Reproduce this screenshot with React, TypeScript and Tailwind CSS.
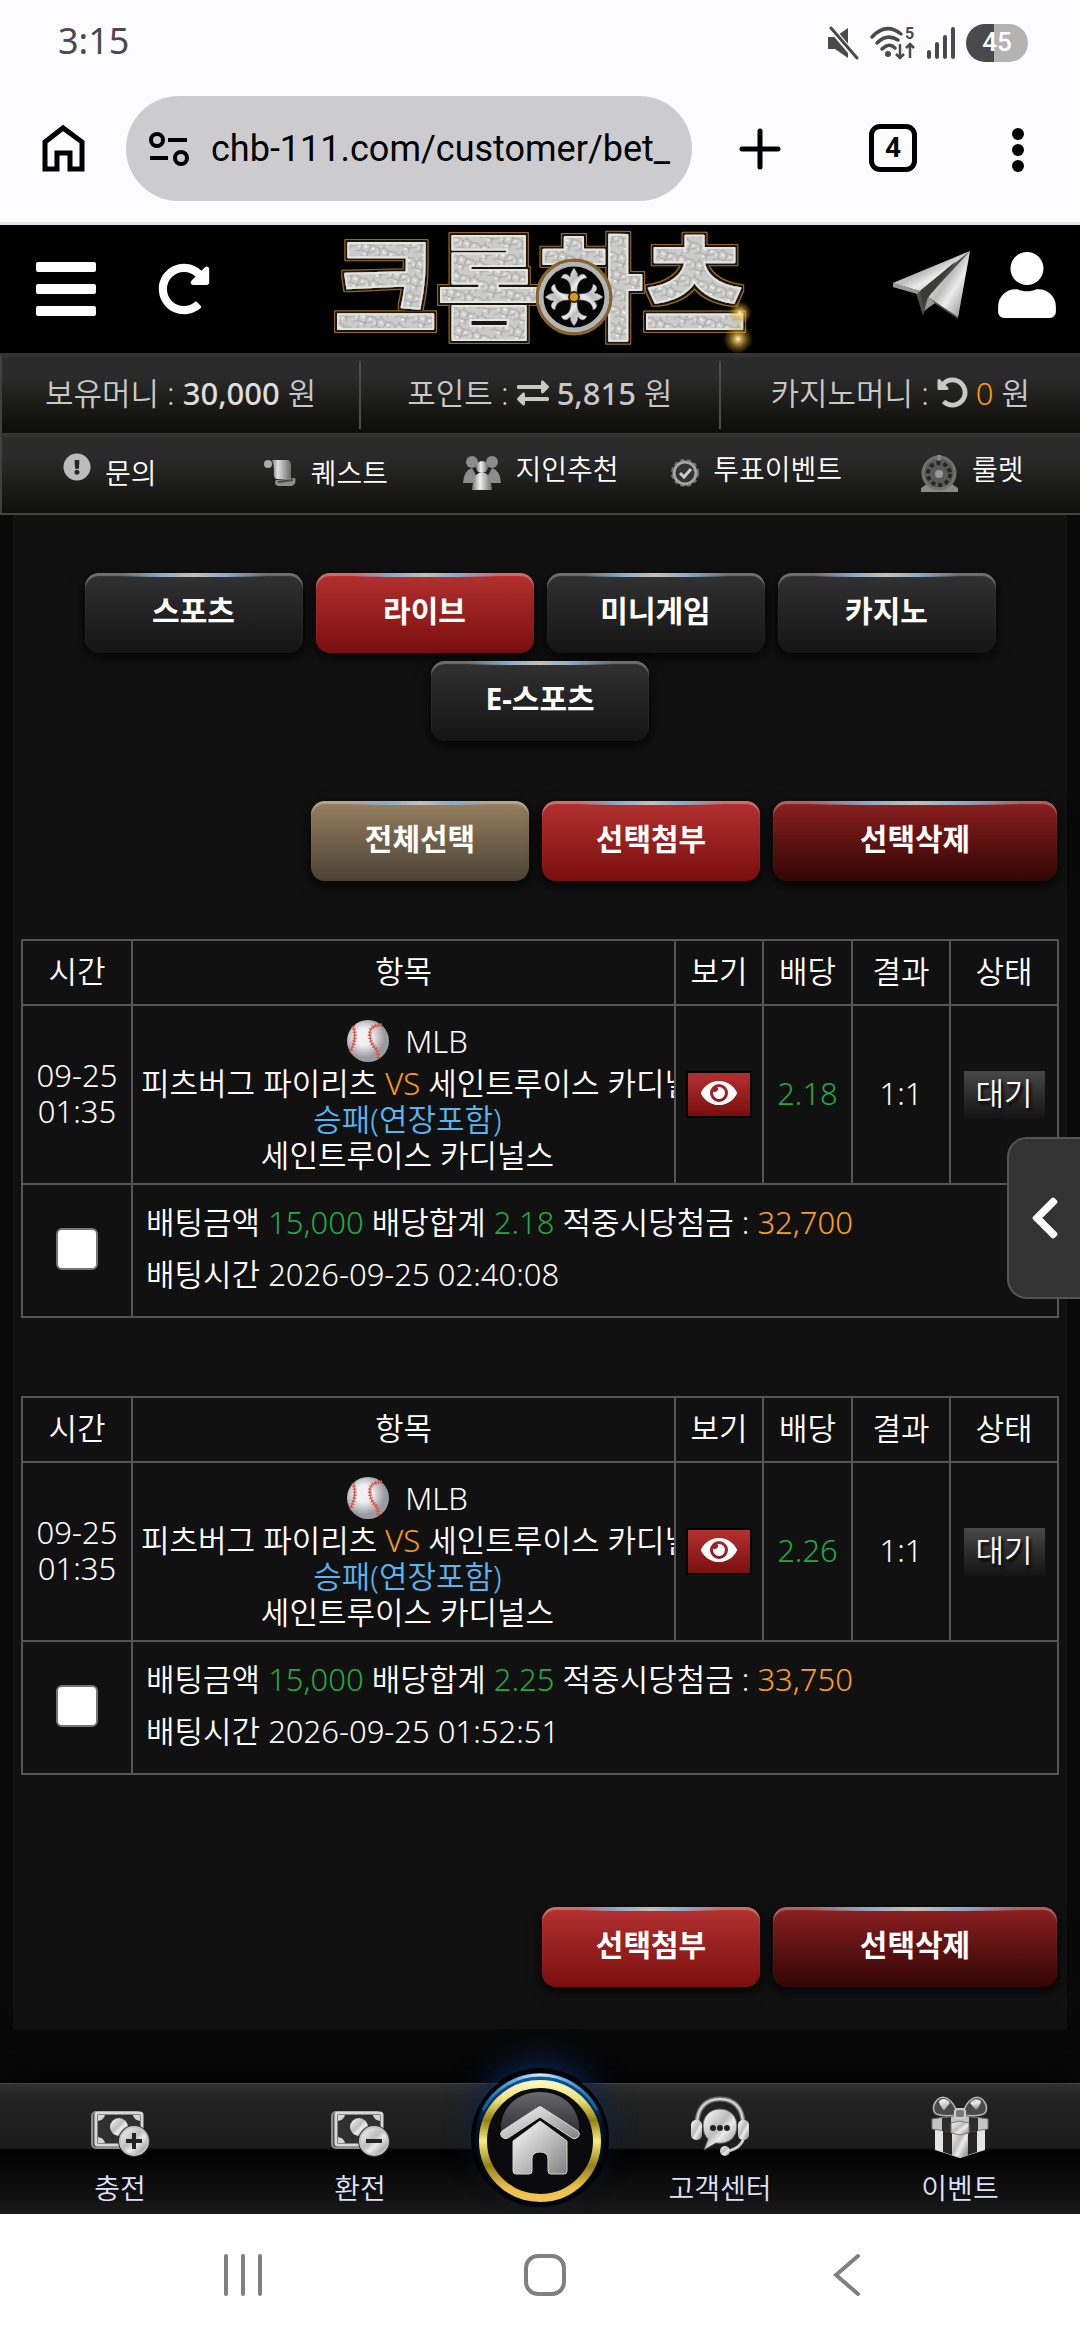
import {
    FaChevronLeft,
    FaExchangeAlt,
    FaExclamationCircle,
    FaEye,
    FaRedoAlt,
    FaUndoAlt,
    FaUser,
} from "react-icons/fa";

const tabs = ["스포츠", "라이브", "미니게임", "카지노", "E-스포츠"];

const bets = [
    {
        id: 1,
        odds: "2.18",
        amount: "15,000",
        totalOdds: "2.18",
        payout: "32,700",
        placedAt: "2026-09-25 02:40:08",
    },
    {
        id: 2,
        odds: "2.26",
        amount: "15,000",
        totalOdds: "2.25",
        payout: "33,750",
        placedAt: "2026-09-25 01:52:51",
    },
];

const tones = {
    dark: "from-[#323232] to-[#151515]",
    red: "from-[#b53030] to-[#7a0e0e]",
    wine: "from-[#8e2020] to-[#330606]",
    gold: "from-[#988060] to-[#4c4335]",
};

function GlossButton({
    tone,
    wide,
    children,
}: {
    tone: keyof typeof tones;
    wide?: boolean;
    children: React.ReactNode;
}) {
    return (
        <button
            type="button"
            className={`relative h-20 ${wide ? "w-[284px]" : "w-[218px]"} overflow-hidden rounded-[14px] bg-linear-to-b pb-[6px] text-[30px] font-bold text-white shadow-[inset_0_3px_1px_rgba(255,255,255,0.3),0_4px_12px_2px_rgba(0,0,0,0.7)] ${tones[tone]}`}
        >
            <span className="absolute inset-x-9 top-0 h-1 bg-[linear-gradient(90deg,transparent,#8fa9c4_28%,#c4bfb8_50%,#8fa9c4_72%,transparent)]" />
            {children}
        </button>
    );
}

function Metal({ id }: { id: string }) {
    return (
        <linearGradient id={id} x1="0" y1="0" x2="1" y2="1">
            <stop offset="0" stopColor="#ffffff" />
            <stop offset="0.45" stopColor="#bcbcbc" />
            <stop offset="0.6" stopColor="#ececec" />
            <stop offset="1" stopColor="#777777" />
        </linearGradient>
    );
}

function Logo() {
    return (
        <svg width="432" height="128" viewBox="0 0 432 128" role="img" aria-label="크롬하츠" className="overflow-visible">
            <defs>
                <filter id="bevel" x="-5%" y="-10%" width="110%" height="120%">
                    <feMorphology in="SourceAlpha" operator="dilate" radius="3" result="outer" />
                    <feFlood floodColor="#96692c" />
                    <feComposite in2="outer" operator="in" result="gold" />
                    <feMorphology in="SourceAlpha" operator="dilate" radius="2" result="inner" />
                    <feFlood floodColor="#1c140b" />
                    <feComposite in2="inner" operator="in" result="dark" />
                    <feMerge>
                        <feMergeNode in="gold" />
                        <feMergeNode in="dark" />
                        <feMergeNode in="SourceGraphic" />
                    </feMerge>
                </filter>
                <radialGradient id="spark">
                    <stop offset="0" stopColor="#fff8d0" />
                    <stop offset="0.3" stopColor="#f5c95a" stopOpacity="0.7" />
                    <stop offset="1" stopColor="#c08010" stopOpacity="0" />
                </radialGradient>
                <pattern id="crackle" width="19" height="17" patternUnits="userSpaceOnUse" patternTransform="rotate(18)">
                    <rect width="19" height="17" fill="#cbcbc9" />
                    <path d="M0 4l4 2 3-3 6 2 6-1M4 6l1 6-5 3M5 12l7 1 7-4M13 5l-1 8M7 3V0M12 13l1 4" fill="none" stroke="#999" strokeWidth="0.8" />
                    <path d="M7 7l3 1M15 8l2-1M2 9l1 1M8 15l2-1" stroke="#f8f8f8" strokeWidth="1.4" />
                </pattern>
                <Metal id="wheel" />
            </defs>
            <text
                x="10"
                y="105"
                fontFamily="'Noto Sans CJK KR', sans-serif"
                fontWeight="900"
                fontSize="112"
                fill="url(#crackle)"
                stroke="#e4e4e2"
                strokeWidth="2"
                strokeLinejoin="round"
                filter="url(#bevel)"
            >
                크롬하츠
            </text>
            <circle cx="250" cy="72" r="37" fill="#050505" stroke="#8a6426" strokeWidth="3" />
            <circle cx="250" cy="72" r="33" fill="none" stroke="#b4b4b4" strokeWidth="5" />
            <g fill="url(#wheel)" stroke="#555" strokeWidth="0.5">
                {[0, 90, 180, 270].map((deg) => (
                    <path
                        key={deg}
                        transform={`rotate(${deg} 250 72)`}
                        d="M247 70C247 60 246 54 237 53C239 48 243 48 246 52C246 48 248 46 250 43C252 46 254 48 254 52C257 48 261 48 263 53C254 54 253 60 253 70Z"
                    />
                ))}
            </g>
            <circle cx="250" cy="72" r="5" fill="#d99a25" stroke="#3a2505" strokeWidth="2" />
            <circle cx="416" cy="88" r="12" fill="url(#spark)" />
            <circle cx="414" cy="114" r="15" fill="url(#spark)" />
        </svg>
    );
}

function PaperPlane() {
    return (
        <svg width="80" height="70" viewBox="0 0 80 70">
            <defs>
                <Metal id="plane" />
            </defs>
            <path d="M1 33L78 1 66 69 36 49 31 66 24 43 1 37z" fill="#4d4d4b" />
            <path d="M1 33L78 1 28 41z" fill="url(#plane)" />
            <path d="M78 1L66 67 36 47z" fill="url(#plane)" />
            <path d="M64 11L28 41l4 20 5-15z" fill="#3c3c3a" />
            <path d="M1 33v4l24 7 3-3zM32 61l11-8-7-6z" fill="#999" />
        </svg>
    );
}

function QuestIcon() {
    return (
        <svg width="34" height="32" viewBox="0 0 34 32">
            <defs>
                <linearGradient id="quest">
                    <stop offset="0" stopColor="#777" />
                    <stop offset="0.3" stopColor="#e0e0e0" />
                    <stop offset="1" stopColor="#6a6a6a" />
                </linearGradient>
            </defs>
            <circle cx="5" cy="7" r="4" fill="#aaa" />
            <path d="M9 3h16q3 1 3 5v14H13q-3-2-2-7 0-7-2-12z" fill="url(#quest)" />
            <path d="M13 23l19-2q2 5-3 8H15q-5-2-2-6z" fill="#8d8d8d" />
            <path d="M15 25l15-2" stroke="#4a4a4a" strokeWidth="2" />
        </svg>
    );
}

function PeopleIcon() {
    return (
        <svg width="38" height="36" viewBox="0 0 38 36">
            <defs>
                <linearGradient id="people">
                    <stop offset="0" stopColor="#777" />
                    <stop offset="0.4" stopColor="#f0f0f0" />
                    <stop offset="1" stopColor="#6a6a6a" />
                </linearGradient>
            </defs>
            <g fill="#8c8c8c">
                <circle cx="9" cy="7" r="6" />
                <circle cx="29" cy="7" r="6" />
                <path d="M0 28q1-13 9-15l8 15zM38 28q-1-13-9-15l-8 15z" />
            </g>
            <circle cx="19" cy="12" r="6" fill="url(#people)" />
            <path d="M9 35q1-15 7-17h6q6 2 7 17z" fill="url(#people)" />
        </svg>
    );
}

function VoteIcon() {
    return (
        <svg width="28" height="32" viewBox="0 0 28 32" fill="none">
            <circle cx="14" cy="16" r="11" fill="#333" stroke="#a5a5a5" strokeWidth="3" />
            <circle cx="14" cy="16" r="13" stroke="#777" strokeWidth="2" strokeDasharray="4 3" />
            <path d="M9 16l4 4 7-8" stroke="#ccc" strokeWidth="3" />
        </svg>
    );
}

function RouletteIcon() {
    return (
        <svg width="37" height="38" viewBox="0 0 37 38" fill="none">
            <path d="M0 38v-4l6-4h25l6 4v4z" fill="#888" />
            <circle cx="18" cy="19" r="16" fill="#5a5a5a" stroke="#707070" strokeWidth="3" />
            <circle cx="18" cy="20" r="11" stroke="#262626" strokeWidth="4" strokeDasharray="4 3" />
            <circle cx="18" cy="20" r="4" fill="#999" />
            <path d="M18 1v5" stroke="#888" strokeWidth="4" />
        </svg>
    );
}

function Baseball() {
    return (
        <svg width="42" height="42" viewBox="0 0 42 42" fill="none">
            <defs>
                <radialGradient id="ball" cx="0.4" cy="0.4">
                    <stop offset="0.4" stopColor="#f0f0f4" />
                    <stop offset="1" stopColor="#9a9aa2" />
                </radialGradient>
            </defs>
            <circle cx="21" cy="21" r="21" fill="url(#ball)" />
            <path d="M6 6q5 12-3 26M35 5q-14 0-12 12 1 7 6 12 3 5 2 10" stroke="#e0604f" strokeWidth="1.5" />
            <path d="M6 6q5 12-3 26M35 5q-14 0-12 12 1 7 6 12 3 5 2 10" stroke="#d4503f" strokeWidth="4" strokeDasharray="1 2" />
        </svg>
    );
}

function CashIcon({ plus }: { plus?: boolean }) {
    const id = plus ? "deposit" : "withdraw";
    return (
        <svg width="60" height="50" viewBox="0 0 60 50" fill="none">
            <defs>
                <Metal id={id} />
            </defs>
            <rect x="2" y="4" width="48" height="36" rx="4" fill="#555" stroke="#8c8c8c" strokeWidth="2" />
            <rect x="6" y="5" width="46" height="32" rx="2" fill="#303030" stroke="#d8d8d8" strokeWidth="3" />
            <path d="M8 7h7q-1 5-7 6zM50 7h-7q1 5 7 6zM8 35h7q-1-5-7-6z" fill="#d5d5d5" />
            <circle cx="29" cy="19" r="9" fill={`url(#${id})`} />
            <circle cx="44" cy="33" r="16" fill="#333" />
            <circle cx="44" cy="33" r="14" fill={`url(#${id})`} stroke="#c4c4c4" strokeWidth="2" />
            <path d={plus ? "M36 33h16M44 25v16" : "M36 33h16"} stroke="#222" strokeWidth="4" />
        </svg>
    );
}

function SupportIcon() {
    return (
        <svg width="60" height="62" viewBox="0 0 60 62" fill="none">
            <defs>
                <Metal id="support" />
            </defs>
            <path d="M7 28C7 12 16 3 30 3s23 9 23 25" stroke="#777" strokeWidth="5" />
            <path d="M7 28C7 12 16 3 30 3s23 9 23 25" stroke="#d8d8d8" strokeWidth="2" />
            <path d="M55 38q-3 15-18 17" stroke="#ccc" strokeWidth="3" />
            <rect x="1" y="24" width="11" height="20" rx="5" fill="url(#support)" />
            <rect x="48" y="24" width="11" height="20" rx="5" fill="url(#support)" />
            <path d="M30 13c-11 0-17 8-17 17 0 6 2 10 5 13l-4 11 12-7c12 2 21-5 21-17 0-10-7-17-17-17z" fill="url(#support)" stroke="#555" />
            <circle cx="35" cy="55" r="5" fill="url(#support)" />
            <g fill="#222">
                <circle cx="23" cy="32" r="3" />
                <circle cx="30" cy="32" r="3" />
                <circle cx="37" cy="32" r="3" />
            </g>
        </svg>
    );
}

function GiftIcon() {
    return (
        <svg width="58" height="62" viewBox="0 0 58 62" fill="none">
            <defs>
                <Metal id="gift" />
            </defs>
            <path d="M27 19C22 2 12-2 6 4q-6 7-2 13 4 4 23 2zM31 19C36 2 46-2 52 4q6 7 2 13-4 4-23 2z" fill="#4a4a4a" stroke="#b5b5b5" strokeWidth="1.5" />
            <path d="M8 5q6-5 11 2l-6 7q-5-5-5-9zM50 5q-6-5-11 2l6 7q5-5 5-9z" fill="url(#gift)" />
            <path d="M4 28h50v26l-25 8-25-8z" fill="#e4e4e4" />
            <path d="M12 28h9v31l-9-3zM37 28h9v28l-9 3z" fill="#262422" />
            <path d="M21 30h16v29l-8 3-8-3z" fill="url(#gift)" />
            <path d="M1 23l28-4 28 4v10l-28 4-28-4z" fill="#c4c4c4" stroke="#777" />
            <path d="M11 22l9-1v15l-9-1zM47 22l-9-1v15l9-1z" fill="#2d2d2d" />
            <path d="M20 27l9-2 9 2v10l-9 2-9-2z" fill="url(#gift)" stroke="#777" />
            <rect x="24" y="13" width="10" height="9" rx="3" fill="#777" stroke="#ccc" strokeWidth="2" />
        </svg>
    );
}

function HomeBadge() {
    return (
        <svg width="140" height="140" viewBox="0 0 140 140" className="block">
            <defs>
                <linearGradient id="rim" x1="0" y1="0" x2="0" y2="1">
                    <stop offset="0" stopColor="#0b62ac" />
                    <stop offset="0.15" stopColor="#02427e" />
                    <stop offset="0.4" stopColor="#001428" />
                    <stop offset="1" stopColor="#00060c" />
                </linearGradient>
                <linearGradient id="streak">
                    <stop offset="0" stopColor="#0a5a9c" />
                    <stop offset="0.5" stopColor="#d4f0ff" />
                    <stop offset="1" stopColor="#0a5a9c" />
                </linearGradient>
                <linearGradient id="ring" x1="0" y1="0" x2="0" y2="1">
                    <stop offset="0" stopColor="#fdf7b8" />
                    <stop offset="0.15" stopColor="#e8dc70" />
                    <stop offset="0.32" stopColor="#94800f" />
                    <stop offset="0.5" stopColor="#f7ec7c" />
                    <stop offset="0.72" stopColor="#95801a" />
                    <stop offset="0.9" stopColor="#e8bd48" />
                    <stop offset="1" stopColor="#efc452" />
                </linearGradient>
                <linearGradient id="shine" x1="0" y1="0" x2="0" y2="1">
                    <stop offset="0" stopColor="#69696d" />
                    <stop offset="1" stopColor="#2a2a2e" />
                </linearGradient>
                <linearGradient id="house" x1="0" y1="0" x2="1" y2="1">
                    <stop offset="0" stopColor="#ffffff" />
                    <stop offset="1" stopColor="#808080" />
                </linearGradient>
            </defs>
            <circle cx="70" cy="70" r="69" fill="#00040a" />
            <circle cx="70" cy="70" r="65" fill="url(#rim)" />
            <path d="M13 42A64 64 0 0 1 127 42" fill="none" stroke="url(#streak)" strokeWidth="3" />
            <circle cx="70" cy="73" r="57" fill="#0b0b0e" stroke="url(#ring)" strokeWidth="8" />
            <path d="M31 56C34 35 51 24 70 24s36 11 39 32q1 11-5 13H36q-6-2-5-13z" fill="url(#shine)" />
            <path d="M70 37l39 31-8 10-31-23-31 23-8-10z" fill="#0b0b0e" />
            <g stroke="#d8d4cc" strokeWidth="1">
                <path d="M70 53L97 73v30q0 3-3 3H81q-3 0-3-3V91q0-7-8-7t-8 7v12q0 3-3 3H46q-3 0-3-3V73z" fill="url(#house)" />
                <path d="M70 38l38 25q3 3 0 6t-6 1L70 49 38 70q-3 2-6-1t0-6z" fill="url(#house)" />
            </g>
        </svg>
    );
}

const quickLinks = [
    { label: "문의", icon: <FaExclamationCircle className="mb-3 text-[28px] text-[#bbb]" />, raised: false },
    { label: "퀘스트", icon: <QuestIcon />, raised: false },
    { label: "지인추천", icon: <PeopleIcon />, raised: true },
    { label: "투표이벤트", icon: <VoteIcon />, raised: true },
    { label: "룰렛", icon: <RouletteIcon />, raised: true },
];

function BrowserBar() {
    return (
        <div className="bg-[#fcfcfe] font-normal text-black">
            <div className="flex h-[81px] items-center justify-between pr-[52px] pl-[58px] text-[#4a4a4a]">
                <span className="font-['Noto_Sans',sans-serif] text-[36px] leading-10">3:15</span>
                <div className="flex items-center gap-[10px] pt-1">
                    <svg width="34" height="34" viewBox="0 0 34 34" fill="#4a4a4a">
                        <path d="M2 11h7L22 2v30L9 23H2z" />
                        <path d="M3 0L31 33" stroke="#fcfcfe" strokeWidth="6" />
                        <path d="M5 2L31 32" stroke="#4a4a4a" strokeWidth="3" strokeLinecap="round" />
                    </svg>
                    <svg width="46" height="34" viewBox="0 0 46 34" fill="none" stroke="#4a4a4a" strokeWidth="3.5" className="overflow-visible">
                        <path d="M2 11Q16-4 31 8M7 17q10-10 21-3M12 23q7-7 13-1" strokeLinecap="round" />
                        <circle cx="18" cy="28" r="3" fill="#4a4a4a" stroke="none" />
                        <path d="M30 18v14m-4-4l4 4 4-4M40 32V18m-4 4l4-4 4 4" strokeWidth="2.5" />
                        <text x="35" y="13" fill="#4a4a4a" stroke="none" fontSize="16" fontWeight="700" fontFamily="Roboto, sans-serif">5</text>
                    </svg>
                    <svg width="30" height="34" viewBox="0 0 30 34" stroke="#4a4a4a" strokeWidth="4" strokeLinecap="round">
                        <path d="M3 26v5M11 18v13M19 11v20M27 3v28" />
                    </svg>
                    <span className="flex h-[38px] w-[62px] items-center justify-center rounded-full bg-linear-to-r from-[#4a4a4a] from-45% to-[#b3b3b3] to-45% font-['Roboto',sans-serif] text-[26px] font-medium text-white">
                        45
                    </span>
                </div>
            </div>
            <div className="flex h-[141px] items-start pt-[15px] pr-[56px] pl-[42px]">
                <button type="button" aria-label="홈" className="mt-7 w-[43px]">
                    <svg width="43" height="48" viewBox="0 0 43 48" fill="none" stroke="#000" strokeWidth="5">
                        <path d="M3 18L21 4l19 14v27H28V29H15v16H3z" />
                    </svg>
                </button>
                <label className="ml-[41px] flex h-[105px] flex-1 items-center gap-[22px] rounded-full bg-[#ccccce] pr-4 pl-[23px]">
                    <svg width="40" height="36" viewBox="0 0 40 36" fill="none" stroke="#000" strokeWidth="4" className="shrink-0">
                        <circle cx="8" cy="9" r="6" />
                        <path d="M19 9h19M1 27h18" />
                        <circle cx="32" cy="27" r="6" />
                    </svg>
                    <input
                        type="text"
                        aria-label="주소"
                        defaultValue="chb-111.com/customer/bet_"
                        className="w-full min-w-0 bg-transparent font-['Roboto',sans-serif] text-[36px] outline-none"
                    />
                </label>
                <button type="button" aria-label="새 탭" className="mt-8 ml-[47px]">
                    <svg width="42" height="42" viewBox="0 0 42 42" stroke="#000" strokeWidth="5" strokeLinecap="round">
                        <path d="M3 21h36M21 3v36" />
                    </svg>
                </button>
                <button type="button" className="mt-7 ml-[88px] flex size-12 items-center justify-center rounded-[11px] border-[5px] border-black font-['Roboto',sans-serif] text-[28px] font-bold">
                    4
                </button>
                <button type="button" aria-label="메뉴" className="mt-8 ml-[95px]">
                    <svg width="12" height="44" viewBox="0 0 12 44">
                        <circle cx="6" cy="6" r="6" />
                        <circle cx="6" cy="22" r="6" />
                        <circle cx="6" cy="38" r="6" />
                    </svg>
                </button>
            </div>
            <div className="h-[3px] bg-[#e3e3f0]" />
        </div>
    );
}

function SiteHeader() {
    return (
        <header>
            <div className="flex h-32 items-center justify-between bg-black pr-6 pl-9">
                <div className="flex w-[272px] items-center gap-[62px] text-white">
                    <button type="button" aria-label="전체메뉴">
                        <svg width="60" height="54" viewBox="0 0 60 54" fill="#fff">
                            <rect width="60" height="10" rx="2" />
                            <rect y="22" width="60" height="10" rx="2" />
                            <rect y="44" width="60" height="10" rx="2" />
                        </svg>
                    </button>
                    <button type="button" aria-label="새로고침" className="text-[52px]">
                        <FaRedoAlt />
                    </button>
                </div>
                <a href="#main">
                    <Logo />
                </a>
                <div className="flex w-[284px] items-center justify-end gap-[26px] pb-2 text-[66px] text-white">
                    <a href="#telegram" aria-label="텔레그램">
                        <PaperPlane />
                    </a>
                    <button type="button" aria-label="내 정보">
                        <FaUser className="w-[58px]" />
                    </button>
                </div>
            </div>
            <div className="grid h-20 grid-cols-3 items-center divide-x-2 divide-[#4c4c4c] border-t-4 border-l-2 border-t-[#333] border-l-[#3f3f3f] bg-linear-to-b from-[#2b2b2b] from-25% to-[#0c0d08] text-center text-[31px] leading-[64px] text-[#c8c8c8]">
                <p className="pb-1">
                    보유머니 : <b className="font-medium text-[#ddd]">30,000</b> 원
                </p>
                <p className="pb-1">
                    포인트 : <FaExchangeAlt className="mb-2 inline text-[32px]" /> <b className="font-medium">5,815</b> 원
                </p>
                <p className="pb-1">
                    카지노머니 : <FaUndoAlt className="mb-2 inline text-[31px]" /> <span className="text-[#ff9c0a]">0</span> 원
                </p>
            </div>
            <nav className="grid h-[82px] grid-cols-5 border-t-4 border-b-2 border-l-2 border-t-[#333] border-b-[#444] border-l-[#3f3f3f] bg-linear-to-b from-[#2b2b2b] from-25% to-[#0f100b] text-[28px] text-white">
                {quickLinks.map((link) => (
                    <a key={link.label} href="#quick" className="flex items-center justify-center gap-[14px] pb-1 leading-9">
                        {link.icon}
                        <span className={link.raised ? "pb-2" : ""}>{link.label}</span>
                    </a>
                ))}
            </nav>
        </header>
    );
}

function BetTable({ bet }: { bet: (typeof bets)[number] }) {
    const cell = "border-2 border-[#555] p-0 font-[350]";
    return (
        <table className="w-full table-fixed border-collapse text-center text-[31px] leading-9 text-white">
            <colgroup>
                <col className="w-[110px]" />
                <col />
                <col className="w-[88px]" />
                <col className="w-[89px]" />
                <col className="w-[98px]" />
                <col className="w-[108px]" />
            </colgroup>
            <thead>
                <tr className="h-[65px]">
                    {["시간", "항목", "보기", "배당", "결과", "상태"].map((head) => (
                        <th key={head} className={`${cell} pb-1`}>
                            {head}
                        </th>
                    ))}
                </tr>
            </thead>
            <tbody>
                <tr className="h-[179px]">
                    <td className={`${cell} pb-1`}>
                        09-25
                        <br />
                        01:35
                    </td>
                    <td className={`${cell} overflow-hidden whitespace-nowrap`}>
                        <div className="overflow-hidden pl-2">
                            <div className="flex h-12 items-center justify-center gap-4">
                                <Baseball /> MLB
                            </div>
                            <p>
                                피츠버그 파이리츠 <span className="text-[#ff9c0a]">VS</span> 세인트루이스 카디널스
                            </p>
                            <p className="text-[#5bb5f0]">승패(연장포함)</p>
                            <p>세인트루이스 카디널스</p>
                        </div>
                    </td>
                    <td className={cell}>
                        <button
                            type="button"
                            aria-label="보기"
                            className="inline-flex h-[47px] w-[66px] items-center justify-center border-2 border-black bg-linear-to-b from-[#b53030] to-[#7a0e0e] pb-1 align-middle text-[36px]"
                        >
                            <FaEye />
                        </button>
                    </td>
                    <td className={`${cell} pb-1 text-[#28a745]`}>{bet.odds}</td>
                    <td className={`${cell} pb-1`}>1:1</td>
                    <td className={cell}>
                        <span className="inline-block h-12 w-[81px] bg-linear-to-b from-[#484848] to-[#141414] align-middle leading-[44px] text-shadow-[2px_3px_3px_#000]">
                            대기
                        </span>
                    </td>
                </tr>
                <tr className="h-[133px]">
                    <td className={`${cell} pb-1`}>
                        <input
                            type="checkbox"
                            aria-label={`배팅 ${bet.placedAt} 선택`}
                            className="size-[42px] appearance-none rounded-[6px] border-2 border-[#767676] bg-white align-middle"
                        />
                    </td>
                    <td colSpan={5} className={`${cell} pb-[6px] pl-[13px] text-left leading-[52px]`}>
                        <p>
                            배팅금액 <span className="text-[#28a745]">{bet.amount}</span> 배당합계{" "}
                            <span className="text-[#28a745]">{bet.totalOdds}</span> 적중시당첨금 :{" "}
                            <span className="text-[#ffa01e]">{bet.payout}</span>
                        </p>
                        <p>배팅시간 {bet.placedAt}</p>
                    </td>
                </tr>
            </tbody>
        </table>
    );
}

function BottomMenu() {
    const item = "flex h-full flex-[2] flex-col items-center justify-end gap-3 pb-2 leading-9";
    return (
        <nav className="relative flex h-[131px] border-t border-[#444] bg-[linear-gradient(#303030,#232323_12%,#1c1c1c_49%,#000_51%,#191919)] text-[28px] font-[350] text-[#dfe2fa] shadow-[0_-8px_40px_#000]">
            <a href="#deposit" className={item}>
                <CashIcon plus />
                충전
            </a>
            <a href="#withdraw" className={item}>
                <CashIcon />
                환전
            </a>
            <div className="flex-1">
                <a href="#home" aria-label="홈" className="absolute -top-4 left-1/2 -translate-x-1/2 rounded-full shadow-[0_-14px_30px_-6px_#0b2350]">
                    <HomeBadge />
                </a>
            </div>
            <a href="#support" className={item}>
                <SupportIcon />
                고객센터
            </a>
            <a href="#event" className={item}>
                <GiftIcon />
                이벤트
            </a>
        </nav>
    );
}

function SystemNav() {
    return (
        <div className="relative flex h-[126px] items-center bg-white pr-[82px] pb-1 pl-[92px]">
            <button type="button" aria-label="최근 앱" className="flex flex-1 justify-center gap-[13px]">
                <span className="h-[42px] w-1 rounded-full bg-[#808080]" />
                <span className="h-[42px] w-1 rounded-full bg-[#808080]" />
                <span className="h-[42px] w-1 rounded-full bg-[#808080]" />
            </button>
            <button type="button" aria-label="홈 화면" className="flex flex-1 justify-center">
                <span className="size-[42px] rounded-[14px] border-4 border-[#808080]" />
            </button>
            <button type="button" aria-label="뒤로" className="flex flex-1 justify-center">
                <svg width="28" height="44" viewBox="0 0 28 44" fill="none" stroke="#808080" strokeWidth="4" strokeLinecap="round">
                    <path d="M25 3L3 22l22 19" />
                </svg>
            </button>
        </div>
    );
}

export default function App() {
    return (
        <div className="flex min-h-screen flex-col bg-[#090909] font-['Noto_Sans','Noto_Sans_CJK_KR',sans-serif] font-[350]">
            <BrowserBar />
            <SiteHeader />
            <main className="relative grow px-[13px] pb-[54px]">
                <section className="bg-[#111] px-2 pt-[58px] pb-[42px]">
                    <div className="flex flex-wrap justify-center gap-x-[13px] gap-y-2 px-10">
                        {tabs.map((tab) => (
                            <GlossButton key={tab} tone={tab === "라이브" ? "red" : "dark"}>
                                {tab}
                            </GlossButton>
                        ))}
                    </div>
                    <div className="mt-[60px] flex justify-end gap-[13px] px-[2px]">
                        <GlossButton tone="gold">전체선택</GlossButton>
                        <GlossButton tone="red">선택첨부</GlossButton>
                        <GlossButton tone="wine" wide>
                            선택삭제
                        </GlossButton>
                    </div>
                    <div className="mt-[58px] flex flex-col gap-[78px]">
                        {bets.map((bet) => (
                            <BetTable key={bet.id} bet={bet} />
                        ))}
                    </div>
                    <div className="mt-[132px] flex justify-end gap-[13px] px-[2px]">
                        <GlossButton tone="red">선택첨부</GlossButton>
                        <GlossButton tone="wine" wide>
                            선택삭제
                        </GlossButton>
                    </div>
                </section>
                <button
                    type="button"
                    aria-label="메뉴 열기"
                    className="absolute top-[622px] right-0 flex h-[162px] w-[73px] items-center justify-center rounded-l-[20px] border-2 border-r-0 border-[#555] bg-[#333] text-[48px] text-white"
                >
                    <FaChevronLeft />
                </button>
            </main>
            <BottomMenu />
            <SystemNav />
        </div>
    );
}
